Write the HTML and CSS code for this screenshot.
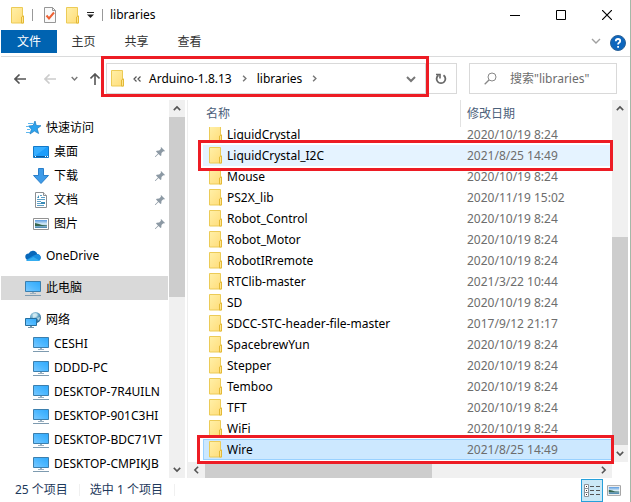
FILE: index.html
```html
<!DOCTYPE html>
<html lang="zh-CN">
<head>
<meta charset="utf-8">
<title>libraries</title>
<link rel="stylesheet" href="styles.css">
</head>
<body>
<svg class="sprites" aria-hidden="true">
  <defs>
    <linearGradient id="gold" x1="0" y1="0" x2="1" y2="1"><stop offset="0" stop-color="#fff0a8"/><stop offset="1" stop-color="#ffdc78"/></linearGradient>
    <linearGradient id="sky" x1="0" y1="1" x2="1" y2="0"><stop offset="0" stop-color="#7cc9ff"/><stop offset=".5" stop-color="#4db8ff"/><stop offset="1" stop-color="#2fa8fb"/></linearGradient>
    <linearGradient id="photo" x1="0" y1="0" x2="0" y2="1"><stop offset="0" stop-color="#5b9be0"/><stop offset=".5" stop-color="#d8ecf6"/><stop offset="1" stop-color="#3f7fa8"/></linearGradient>
    <radialGradient id="globe" cx=".4" cy=".3" r=".7"><stop offset="0" stop-color="#d5edf5"/><stop offset=".5" stop-color="#6ca9c8"/><stop offset="1" stop-color="#24618d"/></radialGradient>
  </defs>
  <symbol id="folder" viewBox="0 0 14 17"><path d="M.5.5h11v8.500h1v7H.5z" fill="url(#gold)" stroke="#eccb57"/><path d="M10.500 16V10l1.500-1h.5v7z" fill="#ffe58f" stroke="#e3b936"/></symbol>
  <symbol id="pc" viewBox="0 0 16 16"><path d="M.5 1.500h15v10H.5z" fill="url(#sky)" stroke="#3b7fae"/><path d="M5 13.500h6M7 12.500h2" stroke="#9bb0bf"/><path d="M0 15.500h16" stroke="#7e9bb0"/></symbol>
  <symbol id="star" viewBox="0 0 16 16"><path d="M10 1l1.300 4.500 4.700.2-3.800 3 1.400 4.800-4.200-2.400L5 14l1.400-4.800L3.500 6l4.600-.5z" fill="#2da3ee" stroke="#187abf" stroke-width=".7"/><path d="M3 3.500h5M1 6.500h3M2 9.500h3M1 12.500h4" stroke="#5eb7ee"/></symbol>
  <symbol id="desktop" viewBox="0 0 16 16"><path d="M.5 2.500h15v11H.5z" fill="#1c9dfb" stroke="#1379c8"/><path d="M2 12L14 3H1v9z" fill="#37aeff"/><path d="M1 12.500h14" stroke="#0c5c9f"/><path d="M2 12.500h1M12 12.500h1M14 12.500h1" stroke="#fff"/></symbol>
  <symbol id="download" viewBox="0 0 16 16"><path d="M5.500.5h5v7h5L8 15.500.5 7.500h5z" fill="#3e9be8" stroke="#2a7fca"/></symbol>
  <symbol id="document" viewBox="0 0 16 16"><path d="M2.500.5h8l3 3v12h-11z" fill="#fff" stroke="#8b8f92"/><path d="M10.500.5v3h3" fill="#eee" stroke="#8b8f92"/><path d="M7 3.500h2M8 5.500h4M4 7.500h8M4 9.500h4M4 11.500h4M4 13.500h7" stroke="#5c9fc6"/><path d="M4 6l2-3v3M8 10h4v2H8z" fill="#388bb6"/></symbol>
  <symbol id="picture" viewBox="0 0 16 12"><path d="M.5.5h15v11H.5z" fill="#fff" stroke="#929292"/><path d="M2 2h12v8H2z" fill="url(#photo)"/><path d="M2 5l4 1 3 1 5 .5V8H2z" fill="#36664f"/></symbol>
  <symbol id="cloud" viewBox="0 0 16 16"><path d="M3.500 12a3.300 3.300 0 0 1 .2-6.600A4.600 4.600 0 0 1 12.200 6a3.500 3.500 0 0 1 2.800 5.600z" fill="#0868ba"/><path d="M1 12l7-4.200 2-.8a3.500 3.500 0 0 1 5.600 3.500Q15.500 13 13 13H3Q1.800 13 1 12z" fill="#198ee0"/><path d="M1.500 12.200L8.500 9l6 3.400q-.6.600-1.500.6H3q-.9 0-1.500-.8z" fill="#35adf0"/></symbol>
  <symbol id="network" viewBox="0 0 16 16"><circle cx="10.500" cy="5.500" r="5.500" fill="url(#globe)"/><path d="M8 2l3-1 2 2-2 2-3 1zM12 6l3-1-1 4z" fill="#d8eef2" opacity=".7"/><path d="M.5 6.500h11v7H.5z" fill="url(#sky)" stroke="#256f9f"/><path d="M3 15.500h6M5 14.500h2" stroke="#7796a8"/></symbol>
  <symbol id="pin" viewBox="0 0 10 10"><path d="M6 0l4 4-1 .5-.7-.2L6.500 6 6.300 8.500 5.500 9 3.500 7 .5 10H0v-.5L3 6.500 1 4.500 1.700 3.700 4.200 3.500 6 1.700 5.700 1z" fill="#8c99a4"/></symbol>
  <symbol id="chev-down" viewBox="0 0 10 10"><path d="M1 3l4 4 4-4" fill="none" stroke="currentColor" stroke-width="2"/></symbol>
  <symbol id="chev-up" viewBox="0 0 10 10"><path d="M1 7l4-4 4 4" fill="none" stroke="currentColor" stroke-width="2"/></symbol>
  <symbol id="chev-right" viewBox="0 0 10 10"><path d="M3 1l4 4-4 4" fill="none" stroke="currentColor" stroke-width="2"/></symbol>
  <symbol id="chev-left" viewBox="0 0 10 10"><path d="M7 1L3 5l4 4" fill="none" stroke="currentColor" stroke-width="2"/></symbol>
  <symbol id="arrow" viewBox="0 0 12 10"><path d="M12 5H1M5.500.500L1 5l4.500 4.500" fill="none" stroke="currentColor" stroke-width="1.600"/></symbol>
</svg>

<div class="window">
  <header class="titlebar">
    <svg class="folder"><use href="#folder"/></svg>
    <span class="bar"></span>
    <button class="plain" aria-label="属性"><svg class="props" viewBox="0 0 12 16"><path d="M.5.5h8l3 3v12H.5z" fill="#fafafa" stroke="#979797"/><path d="M8.500.5v3h3" fill="none" stroke="#979797"/><path d="M2.500 8.500l2.500 3 5-6" fill="none" stroke="#ed6134" stroke-width="2"/></svg></button>
    <button class="plain" aria-label="新建文件夹"><svg class="folder"><use href="#folder"/></svg></button>
    <button class="plain more" aria-label="自定义快速访问工具栏"><svg class="caret" viewBox="0 0 7 6"><path d="M0 .5h7" stroke="#222"/><path d="M0 2.500h7L3.500 6z" fill="#222"/></svg></button>
    <span class="bar"></span>
    <h1>libraries</h1>
    <div class="controls">
      <button class="plain" aria-label="最小化"><svg viewBox="0 0 10 10"><path d="M0 5.500h10" stroke="#000"/></svg></button>
      <button class="plain" aria-label="最大化"><svg viewBox="0 0 10 10"><path d="M.5.5h9v9h-9z" fill="none" stroke="#000"/></svg></button>
      <button class="plain" aria-label="关闭"><svg viewBox="0 0 10 10"><path d="M0 0l10 10M10 0L0 10" stroke="#000" stroke-width="1.200"/></svg></button>
    </div>
  </header>

  <nav class="tabs">
    <button class="tab file">文件</button>
    <button class="tab">主页</button>
    <button class="tab">共享</button>
    <button class="tab">查看</button>
    <button class="plain expand" aria-label="展开功能区"><svg viewBox="0 0 10 10"><path d="M1 3l4 4 4-4" fill="none" stroke="#a0a0a0" stroke-width="1.400"/></svg></button>
    <button class="plain help" aria-label="帮助"><svg viewBox="0 0 16 16"><circle cx="8" cy="8" r="7.500" fill="#0d66bd" stroke="#2c6297"/><path d="M5.800 6.200Q5.800 4 8 4t2.200 1.900Q10.200 7 9 7.800q-.9.600-.9 1.700M8.100 11v1.800" fill="none" stroke="#fff" stroke-width="1.800"/></svg></button>
  </nav>

  <div class="address-row">
    <button class="plain back" aria-label="后退"><svg class="arrow"><use href="#arrow"/></svg></button>
    <button class="plain forward" aria-label="前进"><svg class="arrow"><use href="#arrow"/></svg></button>
    <button class="plain recent" aria-label="最近浏览的位置"><svg class="tiny"><use href="#chev-down"/></svg></button>
    <button class="plain up" aria-label="上移"><svg class="arrow"><use href="#arrow"/></svg></button>
    <div class="address">
      <div class="crumbs">
        <svg class="folder"><use href="#folder"/></svg>
        <svg class="double" viewBox="0 0 8 6"><path d="M3.500.5L1 3l2.500 2.500M7.500.5L5 3l2.500 2.500" fill="none" stroke="#555" stroke-width="1.200"/></svg>
        <button class="plain">Arduino-1.8.13</button>
        <svg class="tiny"><use href="#chev-right"/></svg>
        <button class="plain">libraries</button>
        <svg class="tiny"><use href="#chev-right"/></svg>
        <button class="plain drop" aria-label="以前的位置"><svg class="chev"><use href="#chev-down"/></svg></button>
      </div>
      <button class="plain refresh" aria-label="刷新"><svg viewBox="0 0 12 12"><path d="M8.500 2.200A4.400 4.400 0 1 1 3.500 2.200" fill="none" stroke="#666" stroke-width="1.800"/><path d="M1 1.500h4v4" fill="none" stroke="#666" stroke-width="1.600"/></svg></button>
      <span class="mark mark-address"></span>
    </div>
    <label class="search">
      <svg viewBox="0 0 13 13"><circle cx="8" cy="5" r="4" fill="none" stroke="#888"/><path d="M5 8L.7 12.300" stroke="#888" stroke-width="1.300"/></svg>
      <input type="text" placeholder="搜索&quot;libraries&quot;" aria-label="搜索">
    </label>
  </div>

  <main class="panes">
    <nav class="tree">
      <ul>
        <li><a href="#"><svg><use href="#star"/></svg>快速访问</a>
          <ul>
            <li><a href="#"><svg><use href="#desktop"/></svg>桌面<svg class="pin"><use href="#pin"/></svg></a></li>
            <li><a href="#"><svg><use href="#download"/></svg>下载<svg class="pin"><use href="#pin"/></svg></a></li>
            <li><a href="#"><svg><use href="#document"/></svg>文档<svg class="pin"><use href="#pin"/></svg></a></li>
            <li><a href="#"><svg><use href="#picture"/></svg>图片<svg class="pin"><use href="#pin"/></svg></a></li>
          </ul>
        </li>
        <li><a href="#"><svg><use href="#cloud"/></svg>OneDrive</a></li>
        <li><a href="#" class="current"><svg><use href="#pc"/></svg>此电脑</a></li>
        <li><a href="#"><svg><use href="#network"/></svg>网络</a>
          <ul>
            <li><a href="#"><svg><use href="#pc"/></svg>CESHI</a></li>
            <li><a href="#"><svg><use href="#pc"/></svg>DDDD-PC</a></li>
            <li><a href="#"><svg><use href="#pc"/></svg>DESKTOP-7R4UILN</a></li>
            <li><a href="#"><svg><use href="#pc"/></svg>DESKTOP-901C3HI</a></li>
            <li><a href="#"><svg><use href="#pc"/></svg>DESKTOP-BDC71VT</a></li>
            <li><a href="#"><svg><use href="#pc"/></svg>DESKTOP-CMPIKJB</a></li>
          </ul>
        </li>
      </ul>
    </nav>
    <div class="scroll vertical tree-scroll">
      <svg><use href="#chev-up"/></svg>
      <div class="track"><span class="before"></span><span class="thumb"></span><span class="after"></span></div>
      <svg><use href="#chev-down"/></svg>
    </div>

    <section class="files">
      <div class="list">
        <table>
          <thead><tr><th>名称</th><th>修改日期</th></tr></thead>
          <tbody>
            <tr><td><svg class="folder"><use href="#folder"/></svg>LiquidCrystal</td><td>2020/10/19 8:24</td></tr>
            <tr class="hovered"><td><svg class="folder"><use href="#folder"/></svg>LiquidCrystal_I2C</td><td>2021/8/25 14:49</td></tr>
            <tr><td><svg class="folder"><use href="#folder"/></svg>Mouse</td><td>2020/10/19 8:24</td></tr>
            <tr><td><svg class="folder"><use href="#folder"/></svg>PS2X_lib</td><td>2020/11/19 15:02</td></tr>
            <tr><td><svg class="folder"><use href="#folder"/></svg>Robot_Control</td><td>2020/10/19 8:24</td></tr>
            <tr><td><svg class="folder"><use href="#folder"/></svg>Robot_Motor</td><td>2020/10/19 8:24</td></tr>
            <tr><td><svg class="folder"><use href="#folder"/></svg>RobotIRremote</td><td>2020/10/19 8:24</td></tr>
            <tr><td><svg class="folder"><use href="#folder"/></svg>RTClib-master</td><td>2021/3/22 10:44</td></tr>
            <tr><td><svg class="folder"><use href="#folder"/></svg>SD</td><td>2020/10/19 8:24</td></tr>
            <tr><td><svg class="folder"><use href="#folder"/></svg>SDCC-STC-header-file-master</td><td>2017/9/12 21:17</td></tr>
            <tr><td><svg class="folder"><use href="#folder"/></svg>SpacebrewYun</td><td>2020/10/19 8:24</td></tr>
            <tr><td><svg class="folder"><use href="#folder"/></svg>Stepper</td><td>2020/10/19 8:24</td></tr>
            <tr><td><svg class="folder"><use href="#folder"/></svg>Temboo</td><td>2020/10/19 8:24</td></tr>
            <tr><td><svg class="folder"><use href="#folder"/></svg>TFT</td><td>2020/10/19 8:24</td></tr>
            <tr><td><svg class="folder"><use href="#folder"/></svg>WiFi</td><td>2020/10/19 8:24</td></tr>
            <tr class="selected"><td><svg class="folder"><use href="#folder"/></svg>Wire</td><td>2021/8/25 14:49</td></tr>
          </tbody>
        </table>
        <span class="mark mark-i2c"></span>
        <span class="mark mark-wire"></span>
      </div>
      <div class="scroll vertical">
        <svg><use href="#chev-up"/></svg>
        <div class="track"><span class="before"></span><span class="thumb"></span><span class="after"></span></div>
        <svg><use href="#chev-down"/></svg>
      </div>
      <div class="scroll horizontal">
        <svg><use href="#chev-left"/></svg>
        <div class="track"><span class="thumb"></span><span class="after"></span></div>
        <svg><use href="#chev-right"/></svg>
      </div>
    </section>
  </main>

  <footer class="status">
    <span>25 个项目</span>
    <span>选中 1 个项目</span>
    <div class="views">
      <button class="plain view active" aria-label="详细信息"><svg class="details" viewBox="0 0 16 13"><path d="M.5.5h4v12h-4zM.5 4.500h4M.5 8.500h4" fill="#fff" stroke="#8a9299"/><path d="M2 2.500h1M2 6.500h1M2 10.500h1" stroke="#333"/><path d="M6 2.500h4M12 2.500h4M6 6.500h4M12 6.500h4M6 10.500h4M12 10.500h4" stroke="#555"/></svg></button>
      <button class="plain view" aria-label="大缩略图"><svg class="thumbs"><use href="#picture"/></svg></button>
    </div>
  </footer>
</div>
</body>
</html>
```
FILE: styles.css
```css
* { box-sizing: border-box; }

body {
  margin: 0;
  background: #fff;
  color: #000;
  font: 12px/16px "Noto Sans", "Noto Sans CJK SC", sans-serif;
}

.sprites { position: absolute; width: 0; height: 0; }
svg { display: block; flex: none; }
ul { margin: 0; padding: 0; list-style: none; }

.window {
  display: flex;
  flex-direction: column;
  min-height: 100vh;
  padding-left: 1px;
  border-right: 1px solid #a5b8a8;
}

.plain {
  display: flex;
  align-items: center;
  justify-content: center;
  padding: 0;
  border: 0;
  background: none;
  color: inherit;
  font: inherit;
}

.folder { width: 14px; height: 17px; }
.tiny { width: 7px; height: 7px; color: #777; }
.chev { width: 10px; height: 10px; color: #777; }
.arrow { width: 12px; height: 10px; }

/* title bar */
.titlebar { display: flex; align-items: center; height: 30px; padding-left: 10px; }
.titlebar .bar { width: 1px; height: 12px; margin: 0 11px 0 7px; background: #999; }
.titlebar .plain + .plain { margin-left: 10px; }
.titlebar .plain + .more { margin-left: 7px; }
.titlebar .more + .bar { margin: 0 7px 0 8px; }
.titlebar h1 { margin: 0; font: inherit; }
.props { width: 12px; height: 16px; }
.caret { width: 7px; height: 6px; }
.titlebar .controls { display: flex; margin-left: auto; }
.titlebar .controls .plain { width: 46px; height: 28px; margin: 0; }
.controls svg { width: 10px; height: 10px; }

/* ribbon tabs */
.tabs { display: flex; align-items: center; height: 27px; padding-bottom: 4px; border-bottom: 1px solid #dadbdc; }
.tab { width: 53px; height: 23px; padding: 2px 0 0; border: 0; background: none; color: #333; font: inherit; }
.tab.file { width: 56px; background: #0063b1; color: #fff; }
.expand { margin-left: auto; }
.expand svg { width: 10px; height: 10px; }
.help { margin: 4px 4px 0 9px; }
.help svg { width: 16px; height: 16px; }

/* address row */
.address-row { display: flex; align-items: center; height: 43px; padding: 0 13px; color: #555; }
.forward { margin-left: 18px; color: #ccc; }
.recent { margin-left: 15px; }
.up { margin: 0 5px 0 11px; }
.up svg { transform: rotate(90deg); }
.address { position: relative; display: flex; flex: 1; height: 31px; border: 1px solid #d9d9d9; color: #000; }
.crumbs { display: flex; flex: 1; align-items: center; gap: 9px; padding: 0 9px 0 4px; border-right: 1px solid #d9d9d9; }
.crumbs .double { width: 8px; height: 6px; margin: 0 -1px; }
.drop { margin-left: auto; }
.refresh { width: 30px; }
.refresh svg { width: 12px; height: 12px; }
.search { display: flex; align-items: center; width: 148px; height: 31px; margin-left: 12px; padding-left: 14px; border: 1px solid #d9d9d9; }
.search svg { width: 13px; height: 13px; }
.search input { flex: 1; min-width: 0; margin-left: 13px; padding: 0; border: 0; outline: 0; background: none; font: inherit; }
.search input::placeholder { color: #6d6d6d; opacity: 1; }

.mark { position: absolute; border: 3px solid #ed1c24; pointer-events: none; }
.mark-address { inset: -8px 27px -4px -6px; }
.mark-i2c { top: 40px; right: -1px; left: 10px; height: 31px; }
.mark-wire { top: 335px; right: -2px; left: 9px; height: 29px; z-index: 1; }

/* panes */
.panes { display: flex; flex: 1; }
.tree { width: 168px; padding-top: 16px; padding-right: 1px; white-space: nowrap; }
.tree > ul { display: flex; flex-direction: column; gap: 8px; }
.tree a { display: flex; align-items: center; gap: 5px; height: 24px; padding-left: 24px; color: inherit; text-decoration: none; }
.tree ul ul a { padding-left: 32px; }
.tree a.current { background: #d9d9d9; }
.tree svg { width: 16px; height: 16px; }
.tree .pin { width: 10px; height: 10px; margin: 0 3px 0 auto; }

.scroll { display: flex; align-items: center; background: #f0f0f0; color: #555; }
.scroll svg { width: 8px; height: 17px; }
.track { display: flex; flex: 1; }
.thumb { background: #cdcdcd; }
.vertical { flex-direction: column; width: 16px; }
.vertical .track { flex-direction: column; align-self: stretch; }
.vertical .before { flex: 120; }
.vertical .thumb { flex: 207; }
.tree-scroll .before { flex: 0; }
.tree-scroll .thumb { flex: 180; }
.tree-scroll .after { flex: 164; }
.horizontal { height: 16px; }
.horizontal svg { width: 17px; height: 8px; }
.horizontal .track { align-self: stretch; }
.horizontal .thumb { flex: 226; }
.horizontal .after { flex: 163; }

.files {
  display: grid;
  flex: 1;
  grid-template-columns: 1fr 16px;
  grid-template-rows: 1fr 16px;
  min-width: 0;
  margin: 0 2px 0 2px;
  border-left: 1px solid #eee;
}
.list { position: relative; padding-left: 1px; }
table { display: block; }
thead, tbody { display: block; overflow: hidden; }
tr { display: grid; grid-template-columns: 1fr 152px; align-items: center; height: 21px; margin-left: 14px; }
thead tr { height: 27px; align-items: stretch; }
th { padding: 6px 0 0 3px; color: #4c607a; font-weight: 400; text-align: left; }
th + th { padding-left: 6px; border-left: 1px solid #e2e2e2; }
td { display: flex; align-items: center; gap: 4px; padding: 0 0 0 6px; white-space: nowrap; }
td + td { padding-left: 7px; color: #6d6d6d; }
tbody tr:first-child { margin-top: -3px; }
.hovered { background: #e5f3ff; }
.selected { background: #cce8ff; outline: 1px solid #99d1ff; outline-offset: -1px; }

/* status bar */
.status { display: flex; align-items: center; height: 24px; padding-left: 14px; color: #1e395b; }
.status span { margin-right: 10px; padding-right: 11px; border-right: 1px solid #f0f0f0; line-height: 12px; }
.views { display: flex; margin-left: auto; padding-right: 5px; }
.view { width: 22px; height: 23px; }
.view.active { border: 1px solid #26a0da; background: #cbe8f6; }
.details { width: 16px; height: 13px; }
.thumbs { width: 14px; height: 11px; }
```
